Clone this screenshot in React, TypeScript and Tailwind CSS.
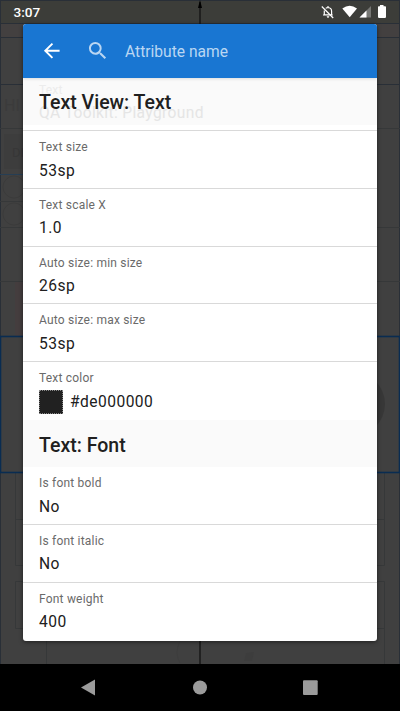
import React from "react";

type Item = { label: string; value: string; swatch?: boolean };

const textItems: Item[] = [
  { label: "Text size", value: "53sp" },
  { label: "Text scale X", value: "1.0" },
  { label: "Auto size: min size", value: "26sp" },
  { label: "Auto size: max size", value: "53sp" },
  { label: "Text color", value: "#de000000", swatch: true },
];
const fontItems: Item[] = [
  { label: "Is font bold", value: "No" },
  { label: "Is font italic", value: "No" },
  { label: "Font weight", value: "400" },
];

function Row({ item, last }: { item: Item; last: boolean }) {
  return (
    <div
      className={
        "flex flex-col pl-[16px] pt-[9px] " +
        (last ? "h-[58px]" : "h-[57.75px] border-b border-[#d9d9d9]")
      }
    >
      <div className="text-[12px] leading-[14px] tracking-[0.2px] text-[#6a6a6a]">{item.label}</div>
      <div className="mt-[4px] flex h-[25px] items-center text-[15.6px] leading-[25px] tracking-[0.45px] text-[#202020]">
        {item.swatch && (
          <span className="-ml-[0.5px] mr-[7.5px] h-[24px] w-[24px] border border-dotted border-[#888] bg-[#212121]" />
        )}
        <span className="pt-px">{item.value}</span>
      </div>
    </div>
  );
}

/* Dimmed application with its layout bounds, seen behind the dialog. */
function Backdrop() {
  return (
    <svg className="absolute inset-0" width="400" height="711" viewBox="0 0 400 711">
      <rect width="400" height="711" fill="#404040" />
      <rect width="400" height="23" fill="#3c3d39" />
      <rect y="24" width="400" height="13" fill="#434040" />
      <g stroke="#292f37" strokeWidth="1">
        <path d="M0 .5H400M0 23.5H400M0 37.5H400M0 84.5H400M.5 0V664M399.5 0V664" />
        <path d="M0 174.5H23" stroke="#263e54" />
      </g>
      <g stroke="#363839" fill="none">
        <path d="M0 128.5H400M0 201.5H23M0 227.5H400M0 281.5H400" />
        <path d="M15.5 473V519.5H23M15.5 519V565.5H23M23 581.5H15.5V628.5H23M46.5 641V664M377 519.5H384.5M384.5 473V565.5H377M377 581.5H384.5V664M377 628.5H384.5" />
      </g>
      <rect x="4" y="134" width="22" height="35" fill="#3d3d3d" />
      <text x="4" y="111" fontSize="16" fontFamily="Roboto, sans-serif" fill="#3b3b3b">HI</text>
      <text x="12" y="157" fontSize="13" fontFamily="Roboto, sans-serif" fill="#373737">DI</text>
      <circle cx="14" cy="187" r="11" fill="none" stroke="#3b3b3b" />
      <circle cx="14" cy="214" r="11" fill="none" stroke="#3b3b3b" />
      <rect x="15" y="282" width="8" height="54" fill="#443d3e" />
      <circle cx="353" cy="404" r="32" fill="#373737" />
      <rect x=".5" y="336.5" width="399" height="136" fill="none" stroke="#092c51" strokeWidth="1.6" />
      <path d="M200 2V664" stroke="#171717" strokeWidth="1.5" />
      <path d="M198 8L200 0L202 8Z" fill="#000" />
      <path d="M246 653l8-1-2 9h-8z" fill="#3d3d3d" />
      <path d="M180 641q-6 12 0 22" stroke="#3d3d3d" fill="none" />
    </svg>
  );
}

function StatusBar() {
  return (
    <div className="flex h-[23.5px] shrink-0 items-center justify-between pl-[13.5px] pr-[13px] text-[13.6px] font-medium text-white">
      <span className="pt-px">3:07</span>
      <svg width="67" height="16" viewBox="0 0 67 16" fill="#fff">
        <g fill="none" stroke="#fff" strokeWidth="1.2">
          <path d="M4.3 6.5V10.8H11.6V7.2Q11.6 3.8 8 3.5Q6.6 3.6 5.7 4.4M8 2V4M3 11H12.8" />
          <path d="M1.8 2.5L13.2 14" />
        </g>
        <path d="M6.7 12.2h2.6q-.2 1.5-1.3 1.5t-1.3-1.5z" />
        <path d="M22.3 4.5Q29.7-.8 37 4.5L29.7 13.3Z" />
        <path d="M51 2V13.5H39.5Z" fillOpacity=".3" />
        <path d="M46.5 6.5V13.5H39.5Z" />
        <path d="M60 1h3.5v1.3h1.7q.8 0 .8.8v10q0 .8-.8.8h-6.4q-.8 0-.8-.8V3.1q0-.8.8-.8H60z" />
      </svg>
    </div>
  );
}

export default function App() {
  return (
    <div className="relative h-[711px] w-[400px] overflow-hidden font-['Roboto',sans-serif]">
      <Backdrop />
      <div className="relative flex h-full flex-col">
        <StatusBar />
        <div className="mx-auto flex h-[617.5px] w-[354px] shrink-0 flex-col overflow-hidden rounded-[3px] bg-white shadow-[0_1px_4px_rgba(0,0,0,0.5)]">
          <header className="relative z-10 flex h-[54.5px] shrink-0 items-center bg-[#1976d2] shadow-[0_1px_3px_rgba(0,0,0,0.12)]">
            <svg className="ml-[16.5px]" width="23.5" height="23.5" viewBox="0 0 24 24" fill="#fff">
              <path d="M20 11H7.83l5.59-5.59L12 4l-8 8 8 8 1.41-1.41L7.83 13H20z" />
            </svg>
            <svg className="ml-[22.5px]" width="23.5" height="23.5" viewBox="0 0 24 24" fill="#bad6f2">
              <path d="M15.5 14h-.79l-.28-.27A6.47 6.47 0 0 0 16 9.5 6.5 6.5 0 1 0 9.5 16c1.61 0 3.09-.59 4.23-1.57l.27.28v.79l5 4.99L20.49 19l-4.99-5zm-6 0C7.01 14 5 11.99 5 9.5S7.01 5 9.5 5 14 7.01 14 9.5 11.99 14 9.5 14z" />
            </svg>
            <span className="ml-[16px] pt-[3px] text-[15.6px] text-[#bad6f2]">Attribute name</span>
          </header>
          <div className="relative h-[53px] shrink-0 border-b border-[#d9d9d9]">
            <div className="flex h-[47px] items-center bg-[#fafafa] pl-[16px] pt-[2px]">
              <div className="absolute left-[16px] top-[5px] text-[12px] leading-[14px] tracking-[0.2px] text-[#ececec]">
                Text
              </div>
              <div className="absolute left-[16px] top-[23px] text-[15.6px] leading-[24px] tracking-[0.35px] text-[#e5e5e5]">
                QA Toolkit: Playground
              </div>
              <h2 className="relative text-[19.5px] font-medium leading-[24px] text-[#202020]">Text View: Text</h2>
            </div>
          </div>
          {textItems.map((it, i) => (
            <Row key={it.label} item={it} last={i === textItems.length - 1} />
          ))}
          <h2 className="flex h-[47px] shrink-0 items-center bg-[#fafafa] pl-[16px] pt-[5px] text-[19.5px] font-medium text-[#202020]">
            Text: Font
          </h2>
          {fontItems.map((it, i) => (
            <Row key={it.label} item={it} last={i === fontItems.length - 1} />
          ))}
        </div>
        <div className="mt-auto flex h-[47px] shrink-0 items-center justify-center bg-black">
          <svg width="400" height="47" viewBox="0 0 400 47" fill="#9b9b9b">
            <path d="M95 15.5V31.5L81 23.5Z" />
            <circle cx="200" cy="23.5" r="7" />
            <rect x="303" y="16.2" width="14.7" height="14.7" rx="1" />
          </svg>
        </div>
      </div>
    </div>
  );
}
